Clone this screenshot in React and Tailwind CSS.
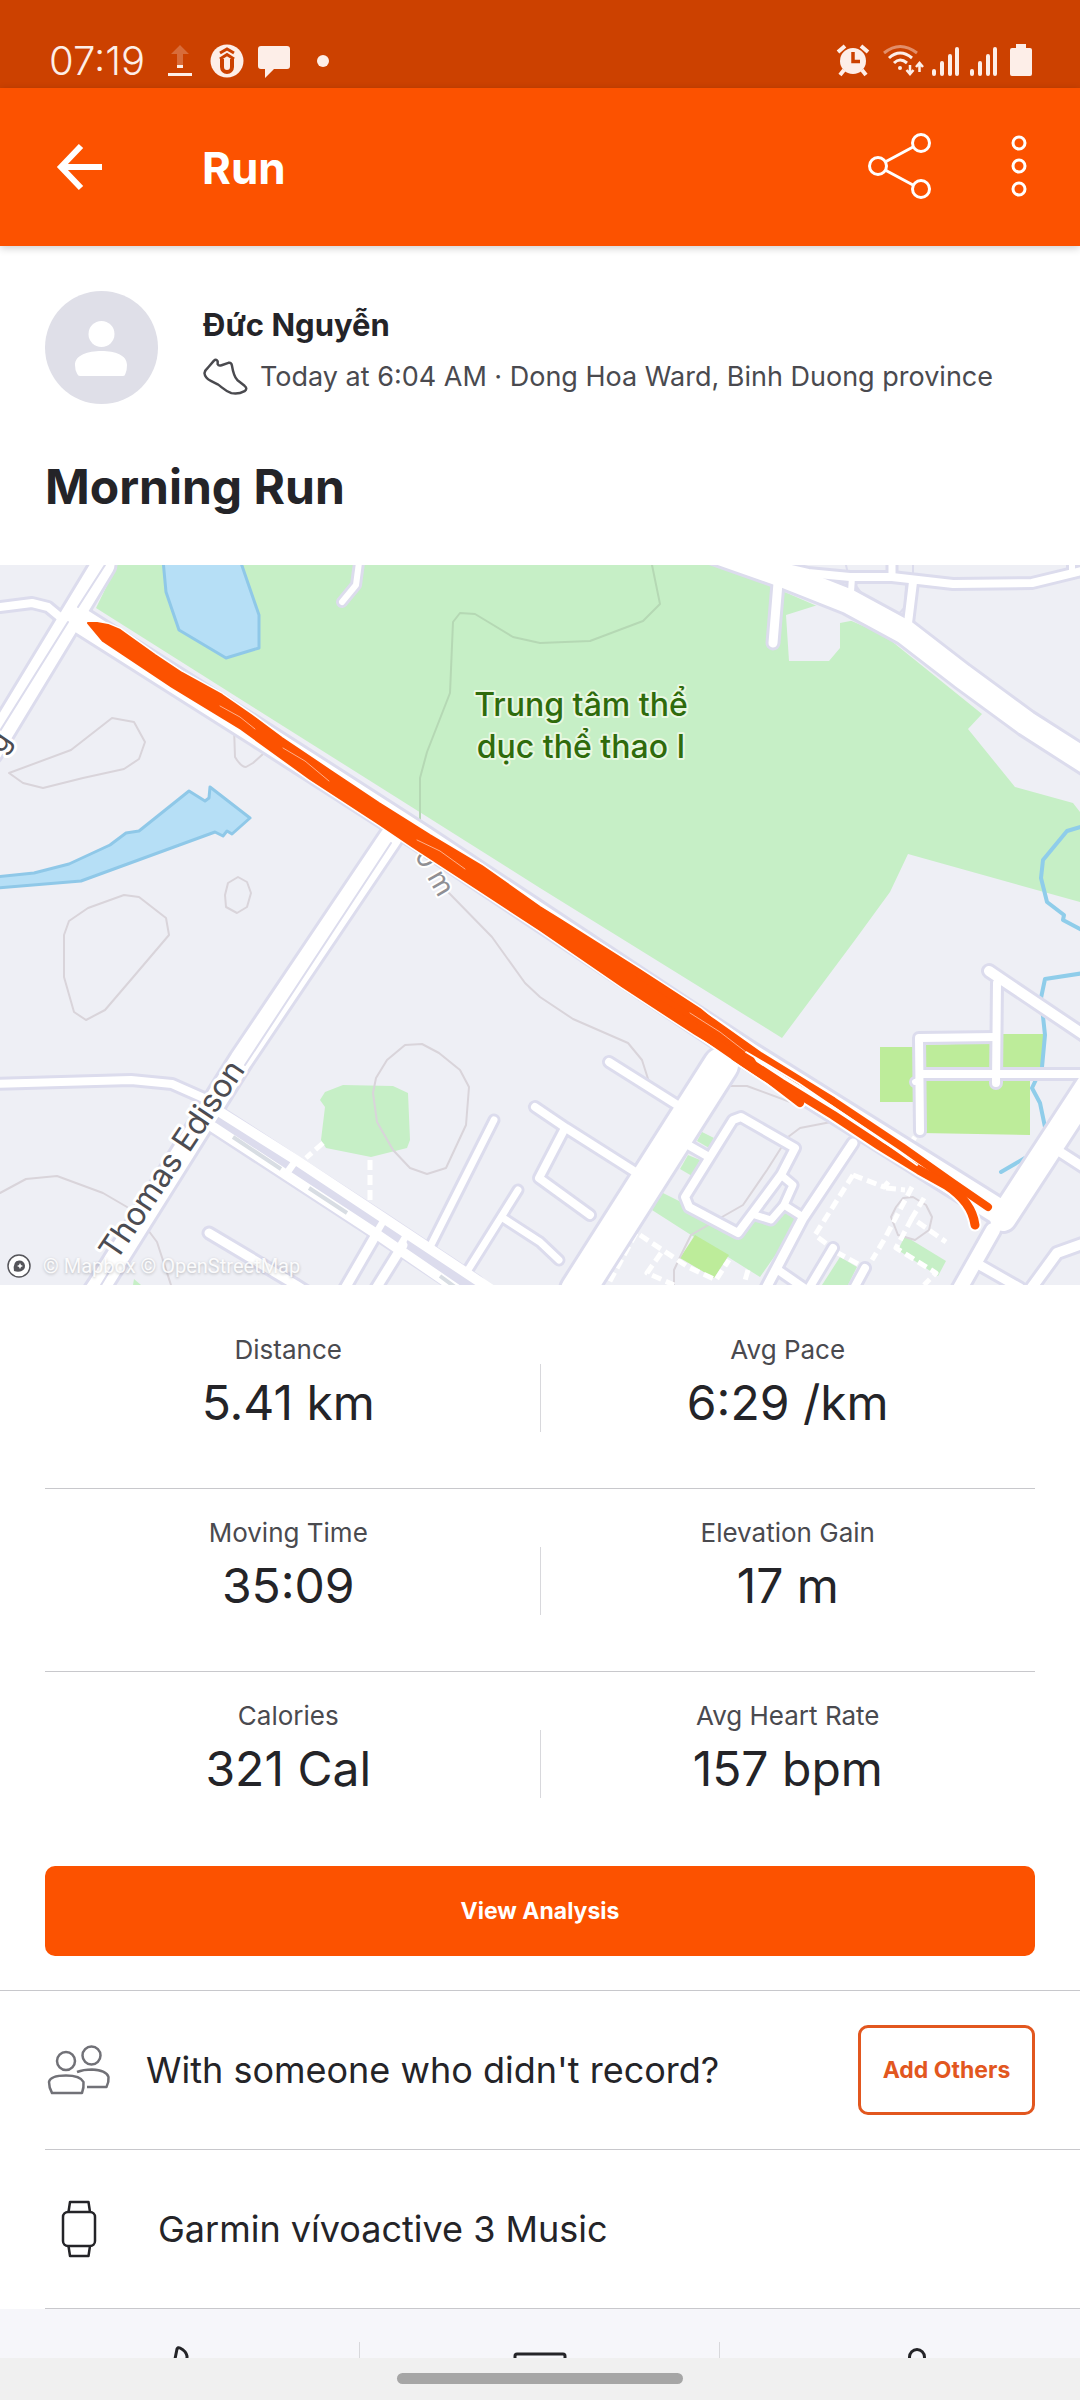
import clsx from "clsx";

const stats = [
  [
    { label: "Distance", value: "5.41 km" },
    { label: "Avg Pace", value: "6:29 /km" },
  ],
  [
    { label: "Moving Time", value: "35:09" },
    { label: "Elevation Gain", value: "17 m" },
  ],
  [
    { label: "Calories", value: "321 Cal" },
    { label: "Avg Heart Rate", value: "157 bpm" },
  ],
];

// [path, width], drawn with a lilac casing under a white fill
const roads = [
  ["M103 565L0 735L-10 752", 23],
  ["M0 607L32 603L48 607L66 622", 8],
  ["M360 555L356 585L342 602", 6],
  ["M391 837L241 1060L100 1285L90 1300", 22],
  ["M-5 1084L131 1080L172 1084L215 1103", 8],
  ["M209 1233L296 1285L310 1294", 9],
  ["M494 1120L430 1247", 7],
  ["M518 1190L468 1270", 7],
  ["M503 1218L540 1242L559 1260", 7],
  ["M377 1233L344 1290", 9],
  ["M403 1245L375 1290", 9],
  ["M535 1107L566 1128L640 1175", 8],
  ["M564 1130L539 1178L590 1215", 8],
  ["M609 1062L682 1108", 8],
  ["M721 1065L578 1290", 34],
  ["M688 1145L709 1157", 8],
  ["M741 1117L795 1148L781 1175L738 1233L689 1207L685 1197L733 1120Z", 8],
  ["M781 1175L793 1185L784 1205L771 1220L755 1215", 7],
  ["M784 1205L803 1217", 7],
  ["M853 1143L803 1218L765 1290", 9],
  ["M778 1270L804 1288", 8],
  ["M833 1248L808 1290", 8],
  ["M865 1268L853 1290", 8],
  ["M993 1230L959 1290", 14],
  ["M976 1263L1020 1288", 9],
  ["M1057 1150L1085 1168", 9],
  ["M1030 1290L1057 1253L1085 1243", 10],
  ["M920 1131L919 1038L996 1037", 8],
  ["M996 1083L997 983", 8],
  ["M989 971L1090 1039", 10],
  ["M915 1082L920 1080", 6],
  ["M922 1074L1090 1074", 8],
  ["M1097 1074L1003 1218", 26],
  ["M778 583L773 643", 9],
  ["M770 564L808 573L850 577L892 577L953 584L1032 583L1090 569", 8],
  ["M892 555L892 575", 7],
  ["M1072 555L1072 574", 6],
  ["M852 577L851 592", 6],
  ["M913 582L908 623", 8],
  ["M700 546L785 576L848 601L905 632L962 676L1026 723L1090 764", 24],
  ["M78 619L258 733L423 839L747 1054L1001 1213", 25],
];

const contours = [
  "M9 773L71 750L112 718L134 722L145 742L139 759L124 769L83 778L43 788L23 783Z",
  "M234 727L235 757Q241 767 246 767L253 763L263 754",
  "M238 877L247 882L251 893L247 907L237 913L226 907L225 895L228 883Z",
  "M64 935L69 921L88 908L124 895L139 897L166 918L169 935L129 982L105 1010L86 1020L74 1012L64 977Z",
  "M448 892L492 937L525 983L540 997L573 1019L628 1043L642 1060L649 1082L679 1100",
  "M405 1045L422 1044L439 1053L460 1070L469 1087L466 1125L446 1168L427 1174L410 1168L393 1150L377 1122L373 1093L376 1078L387 1060Z",
  "M0 1193L26 1179L57 1176L103 1193L127 1207M148 1230L157 1242L171 1285",
  "M726 1086L747 1086L793 1103M831 1122L800 1128L788 1137L767 1170L743 1205L722 1217L691 1235L681 1255L674 1270L674 1285",
  "M903 1198L913 1197L926 1205L932 1217L929 1230L915 1240L898 1235L891 1217L896 1207Z",
];

const greens = [
  "M117 565L726 565L780 590L884 635L982 714L968 729L1015 787L1073 803L1080 812V902L908 854L890 892L855 940L782 1038L540 888L96 608Z",
  "M343 1085L393 1086L408 1093L410 1140L407 1148L371 1157L326 1148L321 1140L325 1107L320 1100L325 1092Z",
  "M702 1132L714 1138L709 1148L697 1141Z",
  "M688 1155L700 1160L692 1176L680 1169Z",
  "M661 1192L683 1203L736 1238L757 1217L771 1222L786 1213L800 1220L760 1277L728 1257L691 1235L652 1210Z",
  "M840 1257L857 1267L848 1285H822Z",
  "M905 1236L946 1261L938 1276L898 1250Z",
  "M134 1279L141 1285H133Z",
];

const limes = [
  "M880 1047H914V1102H880Z",
  "M922 1045L991 1043L1003 1034H1045L1042 1069H922Z",
  "M922 1080H1030V1135L922 1133Z",
  "M695 1235L729 1255L714 1278L680 1258Z",
];

const footpaths = [
  "M323 1143L306 1158",
  "M370 1160V1202",
  "M636 1233L609 1283",
  "M640 1235L688 1267L716 1280L729 1260",
  "M661 1253L647 1273L674 1285",
  "M748 1270L744 1284",
  "M853 1175L815 1235L828 1245",
  "M836 1252L860 1265",
  "M853 1175L884 1187L890 1180M886 1188L905 1190",
  "M912 1187L884 1240L872 1260",
  "M924 1198L912 1218L946 1242",
  "M912 1218L896 1248L936 1273L924 1285",
  "M915 1137L908 1147",
];

const BAND =
  "M88 623L97 623L108 625L120 630L155 655L182 673L222 695L251 715L282 738L331 771L379 803L430 835L482 866L540 907L561 920L640 970L700 1009L747 1048L760 1070L748 1066L695 1034L623 987L540 930L482 892L413 847L379 824L310 779L241 729L172 687L103 641Z";

const strands = [
  ["M640 975L712 1022L760 1056L833 1101L902 1147L953 1183L988 1207", 8],
  ["M660 1005L747 1061L781 1083L833 1115L880 1146L919 1170L946 1185Q972 1202 975 1225", 9],
  ["M700 1032L745 1063L783 1088", 9],
  ["M735 1057L770 1080L800 1103", 8],
];

const RouteMap = () => (
  <section aria-label="Route map" className="relative">
    <svg
      viewBox="0 565 1080 720"
      className="block w-full h-auto bg-[#eeeff5]"
      fill="none"
      strokeLinecap="round"
      strokeLinejoin="round"
      fontFamily="Inter, 'Noto Sans', sans-serif"
    >
      {greens.map((d) => (
        <path key={d} d={d} fill="#c6efc6" />
      ))}
      {limes.map((d) => (
        <path key={d} d={d} fill="#bdec9a" />
      ))}
      <path
        d="M786 615L821 604L845 606L866 618L840 623V648L829 661H789Z"
        fill="#eeeff5"
      />

      {/* water */}
      <g fill="#b6dff6" stroke="#8fc8e8" strokeWidth="3">
        <path d="M163 560L166 592L179 630L226 658L259 648V615L240 560Z" />
        <path d="M-4 877L34 873L69 864L110 845L126 833L139 831L189 791L205 801L209 798L210 787L250 818L232 834L227 831L223 836L215 832L81 881L-4 888Z" />
      </g>
      <g stroke="#8fcdea" strokeWidth="4">
        <path d="M1084 826L1067 831L1043 860L1041 878L1047 902L1064 915L1063 920L1084 931" />
        <path d="M1084 973L1045 979L1041 998L1045 1035L1042 1067L1032 1088L1040 1103L1045 1127" />
        <path d="M1025 1158L1001 1172" />
      </g>

      <g stroke="#d9d4da" strokeWidth="2">
        {contours.map((d) => (
          <path key={d} d={d} />
        ))}
      </g>
      <path
        d="M420 825V778L427 752L450 693L453 622L460 613L475 614L513 637L540 643L590 641L643 621L660 604L652 565"
        stroke="#b5d8b4"
        strokeWidth="2"
      />
      <path
        d="M857 587L864 597L898 615L905 607L906 585M846 565L848 574M913 565V576"
        stroke="#dcdced"
        strokeWidth="2"
      />

      <g stroke="#fff" strokeWidth="5" strokeLinecap="butt" strokeDasharray="10 5">
        {footpaths.map((d) => (
          <path key={d} d={d} />
        ))}
      </g>

      {/* twin carriageway in the lower left */}
      <path d="M216 1120L379 1226L472 1288" stroke="#dcdced" strokeWidth="30" />
      {roads.map(([d, w]) => (
        <path key={d} d={d} stroke="#dcdced" strokeWidth={w + 6} />
      ))}
      {roads.map(([d, w]) => (
        <path key={d} d={d} stroke="#fff" strokeWidth={w} />
      ))}
      <path
        d="M220 1112L296 1160L382 1217L492 1290M213 1127L375 1233L458 1290"
        stroke="#fff"
        strokeWidth="10"
      />
      <path d="M294 1163L289 1170M384 1220L378 1230M406 1236L400 1246" stroke="#fff" strokeWidth="7" />
      <path
        d="M233 1137L281 1169M309 1188L347 1213M440 1276L455 1287"
        stroke="#d8dde3"
        strokeWidth="4"
        strokeLinecap="butt"
      />
      <path
        d="M105 565L78 607M68 622L0 731M391 843L245 1065M112 1267L98 1290"
        stroke="#dcdced"
        strokeWidth="2"
      />

      <g stroke="#fff" strokeWidth="6" paintOrder="stroke">
        <text fontSize="32" fill="#4c4c52" transform="translate(116 1262) rotate(-56)">
          Thomas Edison
        </text>
        <text fontSize="28" fill="#8f8f94" strokeWidth="4" transform="translate(414 855) rotate(60)">
          0 m
        </text>
        <text fontSize="30" fill="#4c4c52" transform="translate(2 755) rotate(-56)">
          g
        </text>
      </g>

      {/* recorded track */}
      <g stroke="#fff">
        <path d={BAND} strokeWidth="5" />
        {strands.map(([d, w]) => (
          <path key={d} d={d} strokeWidth={w + 4} />
        ))}
      </g>
      <path d={BAND} fill="#fc5200" stroke="#fc5200" strokeWidth="2" />
      {strands.map(([d, w]) => (
        <path key={d} d={d} stroke="#fc5200" strokeWidth={w} />
      ))}
      <path d="M746 1052L798 1083L870 1132L917 1165" stroke="#fff" strokeWidth="2" />
      <path
        d="M220 706L240 717L255 729M283 748L305 761L329 781M417 840L440 851L465 869M690 1013L720 1032L746 1052"
        stroke="#ffb08a"
        strokeWidth="1"
      />

      <g
        fill="#2f6b0c"
        stroke="#e9f8e2"
        strokeWidth="4"
        paintOrder="stroke"
        fontSize="32"
        fontWeight="500"
        textAnchor="middle"
      >
        <text x="581" y="716">Trung tâm thể</text>
        <text x="581" y="758">dục thể thao I</text>
      </g>
    </svg>

    <div className="absolute left-[7px] bottom-[7px] flex items-center gap-3">
      <svg viewBox="0 0 24 24" className="w-6 h-6">
        <circle cx="12" cy="12" r="11" fill="#fff" stroke="#55555a" strokeWidth="1.5" />
        <path
          d="M7 17Q5.500 7 12 6.500A5.500 5.500 0 1 1 13 17.500Q10 18 7 17Z"
          fill="#55555a"
        />
        <path d="M13 9l1 2 2 1-2 1-1 2-1-2-2-1 2-1z" fill="#fff" />
      </svg>
      <p className="text-[20px] leading-6 text-white/90 [text-shadow:0_1px_3px_rgba(0,0,0,0.25)] font-[Roboto,sans-serif]">
        © Mapbox © OpenStreetMap
      </p>
    </div>
  </section>
);

const StatusBar = () => (
  <div className="h-[88px] bg-[#cc4100] text-[#fdeee8] flex items-end justify-between pl-[49px] pr-[48px] pb-[10px]">
    <div className="flex items-center h-[34px]">
      <time className="w-[99px] text-[40px] leading-[34px] font-light">07:19</time>
      <svg viewBox="0 0 24 34" className="w-6 h-[34px] ml-5" fill="currentColor">
        <path d="M12 1L21 10H15V21H9V10H3Z" opacity="0.25" />
        <path d="M9 21h6v3H9zM0 29h24v3H0z" />
      </svg>
      <svg viewBox="0 0 34 34" className="w-[34px] h-[34px] ml-[18px]">
        <circle cx="17" cy="17" r="16.500" fill="currentColor" />
        <g fill="none" stroke="#cc4100" strokeWidth="3.500">
          <path d="M10 9L17 5L24 9" strokeWidth="3" />
          <path d="M12 15V23A5 5 0 0 0 22 23V15" strokeWidth="4" />
          <path d="M10 15L17 10.500L24 15" strokeWidth="3" />
        </g>
      </svg>
      <svg viewBox="0 0 34 34" className="w-[34px] h-[34px] ml-[13px]" fill="currentColor">
        <path d="M4 2H30Q33 2 33 5V22Q33 25 30 25H17L8 34V25H4Q1 25 1 22V5Q1 2 4 2Z" />
      </svg>
      <span className="w-3 h-3 rounded-full bg-current ml-[26px]" />
    </div>
    <div className="flex items-center h-[34px]">
      <svg viewBox="0 0 34 34" className="w-[34px] h-[34px]" fill="none" stroke="currentColor">
        <circle cx="17" cy="17" r="13" fill="currentColor" stroke="none" />
        <path d="M2 8L9 2M32 8L25 2" strokeWidth="4" />
        <path d="M8 26L4 31M26 26L30 31" strokeWidth="4" />
        <path d="M17 8V17.500H24" stroke="#cc4100" strokeWidth="3.500" />
      </svg>
      <svg
        viewBox="0 0 42 34"
        className="w-[42px] h-[34px] ml-3"
        fill="none"
        stroke="currentColor"
        strokeWidth="3"
      >
        <path d="M2 9Q18 -4 35 9" opacity="0.45" />
        <path d="M7 14Q18 4 30 14" />
        <path d="M12 19Q18 13 25 19" />
        <circle cx="18" cy="24" r="2" fill="currentColor" stroke="none" />
        <path d="M28 21V30M24.500 26L28 30L31.500 26M37.500 28V19M34 23L37.500 19L41 23" strokeWidth="2.500" />
      </svg>
      {["sim1", "sim2"].map((sim, i) => (
        <svg
          key={sim}
          viewBox="0 0 28 34"
          className={clsx("w-7 h-[34px]", i === 0 ? "ml-2" : "ml-[10px]")}
          stroke="currentColor"
          strokeWidth="4"
          strokeLinecap="round"
        >
          <path d="M2 27V30M10 19V30M18 12V30M25 5V30" />
        </svg>
      ))}
      <svg viewBox="0 0 22 34" className="w-[22px] h-[34px] ml-3" fill="currentColor">
        <path d="M6 0H16V4H20Q22 4 22 6V30Q22 32 20 32H2Q0 32 0 30V6Q0 4 2 4H6Z" />
      </svg>
    </div>
  </div>
);

const AppBar = () => (
  <header className="relative z-10 h-[158px] bg-[#fc5200] text-white flex items-center px-[45px] shadow-[0_2px_8px_rgba(0,0,0,0.2)]">
    <button type="button" aria-label="Back" className="w-[157px] pl-[11px]">
      <svg viewBox="0 0 48 48" className="w-12 h-12" fill="none" stroke="currentColor" strokeWidth="6">
        <path d="M46 24H5M25 3L5 24L25 45" />
      </svg>
    </button>
    <h1 className="grow pt-[2px] text-[44px] leading-[52px] font-bold">Run</h1>
    <button type="button" aria-label="Share" className="mr-[71px]">
      <svg viewBox="0 0 64 68" className="w-16 h-[68px]" fill="none" stroke="currentColor" strokeWidth="3">
        <circle cx="10" cy="33" r="8.500" />
        <circle cx="53" cy="10" r="8.500" />
        <circle cx="53" cy="56" r="8.500" />
        <path d="M18 28.500L45 14M18 37.500L45 52" />
      </svg>
    </button>
    <button type="button" aria-label="More options">
      <svg viewBox="0 0 32 68" className="w-8 h-[68px]" fill="none" stroke="currentColor" strokeWidth="3">
        <circle cx="16" cy="10" r="6" />
        <circle cx="16" cy="33" r="6" />
        <circle cx="16" cy="56" r="6" />
      </svg>
    </button>
  </header>
);

const Athlete = () => (
  <section className="px-[45px] pt-[45px] pb-[48px]">
    <div className="flex gap-[45px]">
      <svg viewBox="0 0 113 113" className="w-[113px] h-[113px] shrink-0">
        <circle cx="56.500" cy="56.500" r="56.500" fill="#dfdfe8" />
        <circle cx="56.500" cy="43" r="13" fill="#fff" />
        <path
          d="M30 74C30 64 43 60 56.500 60S82 64 82 74Q82 79 80.500 82.500Q80 85 78 85H35Q33 85 32 82.500Q30 79 30 74Z"
          fill="#fff"
        />
      </svg>
      <div className="pt-[14px]">
        <h2 className="text-[31px] leading-10 font-bold">Đức Nguyễn</h2>
        <p className="mt-3 flex items-center gap-3 text-[27px] leading-10 text-[#4a4a4f]">
          <svg
            viewBox="0 0 46 38"
            className="w-[45px] h-[38px] shrink-0"
            fill="none"
            stroke="currentColor"
            strokeWidth="2.500"
            strokeLinejoin="round"
          >
            <path d="M11 2.500Q13.500 0 15 3V6Q16 8 19 7L26 4.500Q29 4 29.500 7C30.500 13 32 19 35 22L42.500 28Q46 31 42.500 33.500Q36 37 29 35.500C22 33 19 29 15 26.500L8 23Q2 20 1.500 15Q2 12 5 9.500Z" />
          </svg>
          Today at 6:04 AM · Dong Hoa Ward, Binh Duong province
        </p>
      </div>
    </div>
    <h2 className="mt-[53px] text-[48px] leading-[60px] font-bold">Morning Run</h2>
  </section>
);

const Stat = ({ label, value, className }) => (
  <div className={clsx("pt-[26px] text-center", className)}>
    <dt className="text-[26px] leading-9 text-[#4a4a4f]">{label}</dt>
    <dd className="mt-[5px] text-[48px] leading-[60px]">{value}</dd>
  </div>
);

const Stats = () => (
  <section className="px-[45px] pt-[21px] pb-[34px]">
    {stats.map(([left, right], index) => (
      <dl
        key={left.label}
        className={clsx(
          "h-[183px] grid grid-cols-[1fr_1px_1fr]",
          index < stats.length - 1 && "border-b border-[#c8c8cc]"
        )}
      >
        <Stat {...left} className="pr-2" />
        <div className="mt-[58px] h-[68px] bg-[#d8d8dc]" />
        <Stat {...right} />
      </dl>
    ))}
    <button
      type="button"
      className="mt-[11px] w-full h-[90px] rounded-[10px] bg-[#fc5200] text-white text-[23px] leading-8 font-bold"
    >
      View Analysis
    </button>
  </section>
);

const Rows = () => (
  <section className="border-t border-[#c8c8cc]">
    <div className="ml-[45px] pr-[45px] h-[159px] flex items-center border-b border-[#c8c8cc]">
      <svg
        viewBox="0 0 68 52"
        className="w-[68px] h-[52px] shrink-0"
        fill="none"
        stroke="#717177"
        strokeWidth="2.500"
        strokeLinejoin="round"
      >
        <circle cx="21" cy="17" r="9" />
        <circle cx="46.500" cy="11.500" r="9" />
        <path d="M4 38C5 33 13 31.500 21 31.500S36 33 38.500 38Q39 44 37 49H7Q4 44 4 38Z" />
        <path d="M32 28C37 26 42 25.500 47 25.500C56 26 62 28 63.500 33Q64 38 61.500 43H42" />
      </svg>
      <p className="grow pl-[33px] text-[36px] leading-[48px]">With someone who didn't record?</p>
      <button
        type="button"
        className="shrink-0 w-[177px] h-[90px] rounded-[10px] border-[3px] border-[#e2571f] text-[#e2571f] text-[23px] leading-8 font-bold"
      >
        Add Others
      </button>
    </div>
    <div className="ml-[45px] pr-[45px] h-[159px] flex items-center border-b border-[#c8c8cc]">
      <svg
        viewBox="0 0 68 58"
        className="w-[68px] h-[58px] shrink-0"
        fill="none"
        stroke="currentColor"
        strokeWidth="2.500"
        strokeLinejoin="round"
      >
        <rect x="18" y="12" width="32" height="34" rx="5" />
        <path d="M23.500 12L25 2H43.500L45 12M23.500 46L25 56H43.500L45 46" />
      </svg>
      <p className="pl-[45px] text-[36px] leading-[48px]">Garmin vívoactive 3 Music</p>
    </div>
  </section>
);

const ActionBar = () => (
  <nav className="h-[49px] overflow-hidden bg-[#f6f6fa] grid grid-cols-3 items-start pt-[33px]">
    <button type="button" aria-label="Give kudos" className="h-16 flex justify-center border-r border-[#d8d8dc]">
      <svg viewBox="0 0 64 64" className="w-16 h-16" fill="none" stroke="currentColor" strokeWidth="3">
        <path d="M27 17L29 7Q30 5 32 6Q38 9 39 14V28H54V54H12V30H22Z" />
      </svg>
    </button>
    <button type="button" aria-label="Comment" className="h-16 flex justify-center border-r border-[#d8d8dc]">
      <svg viewBox="0 0 64 64" className="w-16 h-16" fill="none" stroke="currentColor" strokeWidth="3">
        <path d="M7 16V14Q7 12 9 12H55Q57 12 57 14V48H36L26 58V48H7Z" />
      </svg>
    </button>
    <button type="button" aria-label="Add others" className="h-16 flex justify-center">
      <svg viewBox="0 0 64 64" className="w-16 h-16" fill="none" stroke="currentColor" strokeWidth="3">
        <circle cx="49" cy="15" r="7.500" />
        <path d="M38 34Q49 22 60 34M6 50H44" />
      </svg>
    </button>
  </nav>
);

const App = () => {
  return (
    <div className="w-full bg-white text-[#242428] font-[Inter,'Noto_Sans',sans-serif]">
      <StatusBar />
      <AppBar />
      <main>
        <Athlete />
        <RouteMap />
        <Stats />
        <Rows />
      </main>
      <ActionBar />
      <div className="h-[42px] bg-[#f0f0f0] pt-[15px]">
        <div className="mx-auto w-[286px] h-[11px] rounded-full bg-[#a6a6a6]" />
      </div>
    </div>
  );
};

export default App;
